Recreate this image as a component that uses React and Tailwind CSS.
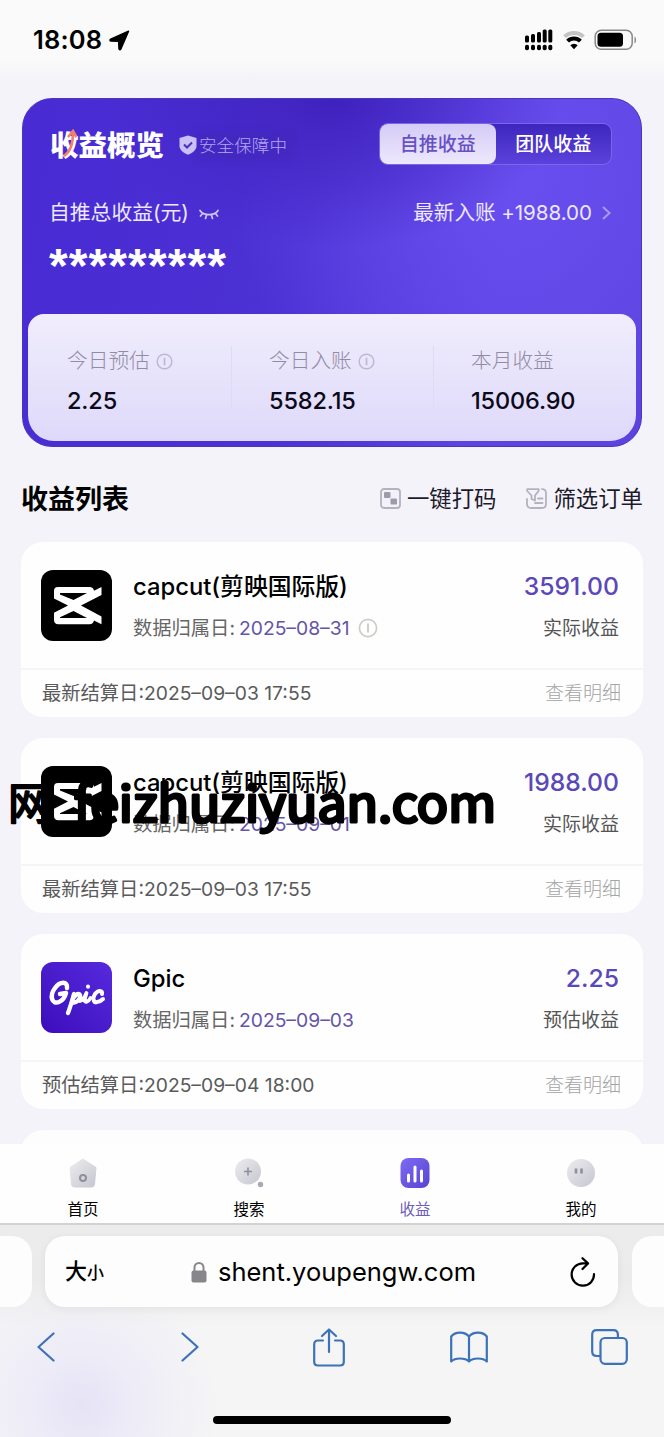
import React, { useState } from 'react';

const orders = [
  {
    name: 'capcut(剪映国际版)',
    logo: 'capcut',
    date: '2025–08–31',
    hint: true,
    amount: '3591.00',
    kind: '实际收益',
    settle: '最新结算日:2025–09–03 17:55'
  },
  {
    name: 'capcut(剪映国际版)',
    logo: 'capcut',
    date: '2025–09–01',
    hint: false,
    amount: '1988.00',
    kind: '实际收益',
    settle: '最新结算日:2025–09–03 17:55'
  },
  {
    name: 'Gpic',
    logo: 'gpic',
    date: '2025–09–03',
    hint: false,
    amount: '2.25',
    kind: '预估收益',
    settle: '预估结算日:2025–09–04 18:00'
  }
];

const stats = [
  { label: '今日预估', value: '2.25', hint: true },
  { label: '今日入账', value: '5582.15', hint: true },
  { label: '本月收益', value: '15006.90', hint: false }
];

const HintIcon = ({ className }) => (
  <svg className={className} viewBox="0 0 20 20" fill="none" stroke="currentColor" strokeWidth="1.7">
    <circle cx="10" cy="10" r="8.6" />
    <path d="M10 5.6v8.8" strokeWidth="2" />
  </svg>
);

const StatusBar = () => (
  <div className="h-20 shrink-0 bg-linear-to-b from-[#fafafa] from-75% to-[#f4f3f8] flex items-center justify-between pl-[33px] pr-[27px]">
    <div className="flex items-center gap-[7px]">
      <span className="text-[25.5px] leading-none font-semibold tracking-[0.2px]">18:08</span>
      <svg className="w-[21px] h-[21px]" viewBox="0 0 20 20">
        <path d="M18.6 1.2 11.2 18.2c-.5 1-1.6.8-1.7-.3l-.3-6.5c0-.4-.2-.6-.6-.6L1.9 10.5c-1.1-.1-1.3-1.2-.3-1.7z" stroke="#000" strokeWidth="1.4" strokeLinejoin="round" />
      </svg>
    </div>
    <div className="flex items-center">
      <svg className="w-7 h-[22px]" viewBox="0 0 28 22">
        <rect x="0" y="6.5" width="4" height="7" rx="1.5" />
        <rect x="6" y="5" width="4" height="8.5" rx="1.5" />
        <rect x="12" y="3" width="4" height="10.5" rx="1.5" />
        <rect x="17.7" y="0.5" width="4" height="13" rx="1.5" />
        <rect x="23.3" y="0.5" width="4" height="13" rx="1.5" />
        <rect x="0" y="15.7" width="4" height="5.6" rx="1.8" />
        <rect x="6" y="15.7" width="4" height="5.6" rx="1.8" />
        <rect x="12" y="15.7" width="4" height="5.6" rx="1.8" />
        <rect x="17.7" y="15.7" width="4" height="5.6" rx="1.8" />
        <rect x="23.3" y="15.7" width="4" height="5.6" rx="1.8" />
      </svg>
      <svg className="w-6 h-5 ml-[9px]" viewBox="0 0 24 20" fill="none">
        <path d="M2.5 6.6a14 14 0 0 1 19 0" stroke="#c4c4c4" strokeWidth="4" />
        <path d="M5.6 11.2a9 9 0 0 1 12.8 0" stroke="#000" strokeWidth="4" />
        <path d="M8.3 15.3a5.2 5.2 0 0 1 7.4 0L12 19.2z" fill="#000" />
      </svg>
      <svg className="w-[43px] h-[22px] ml-2" viewBox="0 0 43 22">
        <rect x="1.2" y="1.2" width="37" height="19" rx="6" fill="none" stroke="#888" strokeWidth="1.5" />
        <rect x="3.5" y="3.7" width="25.5" height="14" rx="3.5" />
        <path d="M40.5 7.5c2 .8 2 6.2 0 7z" fill="#888" />
      </svg>
    </div>
  </div>
);

const CapcutLogo = () => (
  <svg className="w-[71px] h-[71px] shrink-0" viewBox="0 0 71 71">
    <rect width="71" height="71" rx="12" />
    <path
      d="M60.5 17 53 20.8c-.5-2.7-2-3.8-4.5-3.8H17c-2.8 0-4 1.5-4 4v7.5L27 35.5 13 42.8v7.2c0 2.6 1.5 4.2 4.2 4.2h31.3c2.5 0 4-1.2 4.5-3.6l7.5 3.7v-7.8L40 35.5l20.5-10.6zM19 24.5v-1.6h27L32.5 30zM32.5 41l13.5 7.1H19v-.9z"
      fill="#fff"
      fillRule="evenodd"
    />
  </svg>
);

const GpicLogo = () => (
  <div className="w-[71px] h-[71px] shrink-0 rounded-xl bg-linear-to-bl from-[#5629dd] to-[#3c0bbb] flex items-center justify-center">
    <svg className="w-[60px] h-[42px]" viewBox="0 0 60 42" fill="none" stroke="#fff" strokeLinecap="round" strokeLinejoin="round">
      <path d="M20 11C21 4 13 4 8 11 2 19 5 28 12 25c4-1.6 6-5 7-9l-6 1" strokeWidth="4.5" />
      <path d="M21 36c2-5 4-12 6-19-1 3-1 4-2 7 2-6 7-9 8-6 1 4-4 9-8 7" strokeWidth="4.3" />
      <path d="M33 24c3-1 5-4 6.5-8l-2 7c0 3 4 2 6-2" strokeWidth="3.8" />
      <path d="M55 17c1-4-4-4-7 0-3 5-1 9 2 8 3 0 4-1 6-3" strokeWidth="4" />
      <path d="M41 9.5v.2" strokeWidth="4" />
    </svg>
  </div>
);

function Overview({ tab, onTab }) {
  const tabClass = (name) =>
    `flex-1 flex items-center justify-center rounded-lg pt-[2px] text-[19px] font-medium ${
      tab === name ? 'bg-linear-to-b from-[#d4ccf6] to-[#eee8fd] text-[#6651c4]' : 'text-white'
    }`;

  return (
    <section className="h-[349px] shrink-0 mx-[22px] mt-[18px] rounded-[30px] border border-[#4a35bd] bg-[radial-gradient(ellipse_230px_150px_at_310px_0px,#3f22bd_0,#3f22bd00_100%),radial-gradient(ellipse_280px_330px_at_490px_70px,#6a4ff0_0,#6a4ff000_100%),linear-gradient(100deg,#482bd3_0%,#4c31d4_45%,#5a41e0_75%,#5b42dc_100%)] px-[5px] pb-[5px] flex flex-col text-white">
      <div className="flex items-center justify-between mt-[24px] pl-[22px] pr-[24px] h-[42px]">
        <div className="flex items-center">
          <div className="relative top-[2px]">
            <h1 className="text-[28.5px] leading-10 font-black">收益概览</h1>
            <svg className="absolute left-[12px] top-[3px] w-4 h-[30px]" viewBox="0 0 16 30" fill="none" stroke="#f0806e" strokeWidth="2.6">
              <path d="M2 27C8 23 11 15 11 4M6 8l5-6 3.5 6" />
            </svg>
          </div>
          <svg className="relative top-[1px] w-[18px] h-5 ml-[15px]" viewBox="0 0 18 20">
            <path d="M9 0.5 17.5 3v8c0 4-4 7-8.5 8.7C4.5 18 .5 15 .5 11V3z" fill="#c9c0f5" />
            <path d="m5 9.5 3 3 5-5" fill="none" stroke="#4a2fc4" strokeWidth="2" />
          </svg>
          <span className="mt-[4px] ml-[2px] text-[17.6px] font-light text-[#b3a6f4] bg-[#3f27b8]/50 shadow-[0_0_6px_3px_rgba(63,39,184,0.5)] leading-5">安全保障中</span>
        </div>
        <div className="w-[233px] h-[42px] rounded-[9px] border border-[#7a67e6] bg-linear-to-b from-[#3d25bd] to-[#5b42dc] flex">
          <button className={tabClass('self')} onClick={() => onTab('self')}>自推收益</button>
          <button className={tabClass('team')} onClick={() => onTab('team')}>团队收益</button>
        </div>
      </div>

      <div className="flex items-center justify-between mt-[32px] pl-[21px] pr-[25px] h-8">
        <div className="flex items-center">
          <span className="text-[20.8px] text-[#ece8ff]">自推总收益(元)</span>
          <svg className="w-5 h-3 mt-[3px] ml-[10px]" viewBox="0 0 20 12" fill="none" stroke="#cfc6fa" strokeWidth="1.7" strokeLinecap="round">
            <path d="M1 1.5c3.5 5.5 14.5 5.5 18 0M3.5 4.5 1.5 7M7.5 6.2 6.5 9.5M12.5 6.2l1 3.3M16.5 4.5l2 2.5" />
          </svg>
        </div>
        <div className="flex items-center text-[20.6px] text-[#ece8ff]">
          <span className="tracking-[-0.05px]">最新入账 +1988.00</span>
          <svg className="w-[9px] h-4 ml-[10px]" viewBox="0 0 9 16" fill="none" stroke="#a99af2" strokeWidth="2">
            <path d="m1 2 6.5 6L1 14" />
          </svg>
        </div>
      </div>

      <div className="pl-[21px] h-[50px] mt-[12px] text-[48px] leading-[50px] font-bold tracking-[1.1px] font-['Liberation_Sans',sans-serif]">*********</div>

      <div className="mt-auto h-[127px] rounded-t-[16px] rounded-b-[26px] bg-linear-to-b from-[#f1edfc] to-[#ded9fa] grid grid-cols-[201px_202px_1fr]">
        {stats.map((s, i) => (
          <div key={s.label} className={`pt-[33px] relative ${i > 0 ? 'pl-[40px]' : 'pl-[39px]'}`}>
            {i > 0 && <div className="absolute left-[2px] top-[32px] h-16 w-px bg-[#dfdaf5]" />}
            <div className="flex items-center h-7 text-[20.7px] font-light text-[#918ca6]">
              {s.label}
              {s.hint && <HintIcon className="w-[17px] h-[17px] ml-[6px] text-[#bdb8d0]" />}
            </div>
            <div className="h-8 mt-[10px] leading-8 text-[23.5px] tracking-[-0.15px] font-medium text-[#0c0a18]">{s.value}</div>
          </div>
        ))}
      </div>
    </section>
  );
}

function Order({ order }) {
  return (
    <article className="h-[175px] shrink-0 rounded-[22px] bg-[#fefefe] mb-[21px]">
      <div className="h-[128px] border-b-2 border-[#f5f5f7] pl-[20px] pr-[19px] pt-[28px] flex">
        {order.logo === 'capcut' ? <CapcutLogo /> : <GpicLogo />}
        <div className="flex-1 ml-[21px]">
          <h3 className="h-8 mt-[1px] leading-8 text-[23.8px] font-medium text-black whitespace-nowrap">{order.name}</h3>
          <div className="h-7 mt-[11px] flex items-center text-[19.3px] text-[#666] whitespace-nowrap">
            数据归属日:
            <span className="ml-[4px] text-[#6355a8]">{order.date}</span>
            {order.hint && <HintIcon className="w-5 h-5 ml-[8px] text-[#cfcdc8]" />}
          </div>
        </div>
        <div className="text-right mr-[5px]">
          <div className="h-8 leading-8 text-[24.7px] font-medium text-[#5b48b8]">{order.amount}</div>
          <div className="h-7 mt-[13px] leading-7 text-[19px] text-[#555]">{order.kind}</div>
        </div>
      </div>
      <div className="h-[47px] pl-[21px] pr-[22px] flex items-center justify-between text-[19.3px]">
        <span className="text-[#5a5a5a]">{order.settle}</span>
        <span className="mt-[2px] text-[19px] font-light text-[#a4a4a4]">查看明细</span>
      </div>
    </article>
  );
}

const TabBar = () => {
  const tabs = [
    {
      label: '首页',
      icon: (
        <>
          <path d="M14 1 27 9.5 25.5 26c-.2 2-1 3-3 3h-17c-2 0-3-1-3-3L1 9.5z" fill="url(#grey)" stroke="url(#grey)" strokeLinejoin="round" />
          <circle cx="14" cy="20" r="3" fill="none" stroke="#8f8f9d" strokeWidth="2" />
        </>
      )
    },
    {
      label: '搜索',
      icon: (
        <>
          <circle cx="13" cy="13.5" r="13" fill="url(#grey)" />
          <path d="M9 13.5h8M13 9.5v8" stroke="#8f8f9d" strokeWidth="1.6" />
          <circle cx="25.5" cy="26.5" r="2.7" fill="#a9a9b3" />
        </>
      )
    },
    {
      label: '收益',
      active: true,
      icon: (
        <>
          <rect x="-.5" y="0" width="29" height="30" rx="8" fill="url(#violet)" />
          <path d="M7.5 17v6M14 9v14M20.5 13v10" stroke="#fff" strokeWidth="3" strokeLinecap="round" />
        </>
      )
    },
    {
      label: '我的',
      icon: (
        <>
          <circle cx="14" cy="15" r="14" fill="url(#grey)" />
          <path d="M9 10.5v5M14.5 10.5v5" stroke="#8f8f9d" strokeWidth="2.6" />
        </>
      )
    }
  ];
  return (
    <nav className="h-[81px] shrink-0 bg-[#fefefe] border-b-2 border-[#d2d2d2] grid grid-cols-4">
      {tabs.map((t) => (
        <div key={t.label} className="flex flex-col items-center pt-[14px]">
          <svg className="w-7 h-[30px] overflow-visible" viewBox="0 0 28 30">
            <defs>
              <linearGradient id="grey" x1="0" y1="0" x2="1" y2="1">
                <stop offset="0" stopColor="#ececef" />
                <stop offset="1" stopColor="#c6c6d0" />
              </linearGradient>
              <linearGradient id="violet" x1="0" y1="0" x2="1" y2="1">
                <stop offset="0" stopColor="#7d6cf2" />
                <stop offset="1" stopColor="#5a42d3" />
              </linearGradient>
            </defs>
            {t.icon}
          </svg>
          <span className={`mt-[10px] text-[15.5px] leading-6 ${t.active ? 'text-[#6c5db8]' : 'text-black'}`}>{t.label}</span>
        </div>
      ))}
    </nav>
  );
};

const Browser = () => (
  <footer className="h-[212px] shrink-0 bg-[radial-gradient(circle_at_82px_180px,#e6e3f6_0,#eeedf7_60px,#f5f5f6_135px)] flex flex-col">
    <div className="h-[104px] bg-linear-to-b from-[#ececec] via-[#ebebeb] to-transparent pt-[11px] flex justify-between">
      <div className="w-8 h-[71px] rounded-r-[20px] bg-[#fdfdfd]" />
      <div className="w-[574px] h-[71px] rounded-[20px] bg-[#fdfdfd] shadow-[0_2px_8px_rgba(0,0,0,0.06)] flex items-center pl-5 pr-[22px] ml-[13px] mr-[14px]">
        <span className="text-[22px] font-medium w-[44px] whitespace-nowrap">大<span className="text-[17px]">小</span></span>
        <div className="flex-1 flex items-center ml-[82px]">
          <svg className="w-4 h-[22px]" viewBox="0 0 16 22">
            <rect x="0.5" y="9.5" width="15" height="12" rx="2" fill="#87868b" />
            <path d="M3.5 10V6.5a4.5 4.5 0 0 1 9 0V10" fill="none" stroke="#87868b" strokeWidth="2" />
          </svg>
          <span className="ml-[11px] text-[25.5px] leading-8">shent.youpengw.com</span>
        </div>
        <svg className="w-[26px] h-[30px]" viewBox="0 0 26 30" fill="none" stroke="#000" strokeWidth="2.2" strokeLinecap="round" strokeLinejoin="round">
          <path d="M24 17A11.2 11.2 0 1 1 13 6.3h4.5M12.5 1.2l5.5 5.2-5.5 5.6" />
        </svg>
      </div>
      <div className="w-8 h-[71px] rounded-l-[20px] bg-[#fdfdfd]" />
    </div>

    <div className="h-9 flex items-center justify-between pl-[37px] pr-[36px] text-[#3c72b8]">
      <svg className="w-[18px] h-[30px]" viewBox="0 0 18 30" fill="none" stroke="currentColor" strokeWidth="2.2" strokeLinecap="round" strokeLinejoin="round">
        <path d="M16.5 1.5 1.5 15l15 13.5" />
      </svg>
      <svg className="w-[18px] h-[30px] ml-[9px]" viewBox="0 0 18 30" fill="none" stroke="currentColor" strokeWidth="2.2" strokeLinecap="round" strokeLinejoin="round">
        <path d="m1.5 1.5 15 13.5-15 13.5" />
      </svg>
      <svg className="w-8 h-[39px] -ml-[2px]" viewBox="0 0 32 39" fill="none" stroke="currentColor" strokeWidth="2.2" strokeLinecap="round" strokeLinejoin="round">
        <path d="M10 12.5H5c-2.4 0-3.8 1.4-3.8 3.8v17.4c0 2.4 1.4 3.8 3.8 3.8h22c2.4 0 3.8-1.4 3.8-3.8V16.3c0-2.4-1.4-3.8-3.8-3.8h-5M16 24V1.5M9 8l7-6.5L23 8" />
      </svg>
      <svg className="w-[38px] h-8 -ml-[12px]" viewBox="0 0 38 32" fill="none" stroke="currentColor" strokeWidth="2.2" strokeLinejoin="round">
        <path d="M19 5.5C15 .2 5 .2 1.2 5.5V30.5C5 26.5 15 26.5 19 30.5c4-4 14-4 17.8 0V5.5C33 .2 23 .2 19 5.5zM19 5.5v25" />
      </svg>
      <svg className="w-[37px] h-9 -ml-[13px]" viewBox="0 0 37 36" fill="none" stroke="currentColor" strokeWidth="2.2" strokeLinejoin="round">
        <rect x="9.5" y="9" width="26.3" height="25.8" rx="4.5" />
        <path d="M9.5 27H5.6c-3 0-4.4-1.5-4.4-4.5V5.7c0-3 1.5-4.5 4.4-4.5h16.8c3 0 4.5 1.5 4.5 4.5V9" />
      </svg>
    </div>

    <div className="mt-auto mb-[13px] w-[238px] h-2 rounded-full bg-black self-center" />
  </footer>
);

function App() {
  const [tab, setTab] = useState('self');

  return (
    <div className="relative w-[664px] h-[1437px] overflow-hidden bg-[#f4f3f9] flex flex-col text-black font-['Inter','Noto_Sans_CJK_SC',sans-serif]">
      <StatusBar />
      <main className="h-[1064px] shrink-0 overflow-hidden flex flex-col">
        <Overview tab={tab} onTab={setTab} />
        <div className="h-10 shrink-0 mt-[32px] mb-[23px] mx-[21px] flex items-center justify-between">
          <h2 className="mt-[3px] text-[27px] font-bold">收益列表</h2>
          <div className="flex items-center text-[22.4px] text-[#1c1a2c]">
            <svg className="w-[21px] h-[21px] mr-[6px]" viewBox="0 0 21 21">
              <rect x="1" y="1" width="19" height="19" rx="3" fill="#f3f2f8" stroke="#b3b2bf" strokeWidth="1.8" />
              <rect x="4" y="4" width="6.5" height="6" rx="1" fill="#9d9cab" />
              <rect x="10.5" y="10.5" width="6.5" height="6" rx="1" fill="#9d9cab" />
            </svg>
            一键打码
            <svg className="w-[21px] h-[21px] ml-[30px] mr-[6px]" viewBox="0 0 21 21" fill="none" stroke="#b3b2bf" strokeWidth="1.8" strokeLinecap="round" strokeLinejoin="round">
              <path d="M1.2 1.2h11.5v1.5L9 7.5v5L5.5 11V7.5L1.2 3zM16 1.2c2.5 0 4 1.2 4 4V16c0 2.5-1.5 4-4 4H5c-2.5 0-4-1.5-4-4v-5M12 10.5h4.5M9 15h7.5" />
            </svg>
            筛选订单
          </div>
        </div>
        <div className="mx-[21px] flex flex-col shrink-0">
          {orders.map((o, i) => (
            <Order key={i} order={o} />
          ))}
          <div className="h-10 rounded-t-[22px] bg-[#fdfdfd]" />
        </div>
      </main>
      <TabBar />
      <Browser />

      {/* site stamp over the list */}
      <svg className="absolute left-0 top-[765px] w-[510px] h-[80px] pointer-events-none" viewBox="0 0 510 80" stroke="#000" strokeLinejoin="round">
        <text x="8" y="55" fontSize="44" fontWeight="400" strokeWidth="2" fontFamily="'Noto Sans CJK SC', sans-serif">网</text>
        <text x="74" y="57" fontSize="49" fontWeight="400" strokeWidth="3.2" textLength="422" lengthAdjust="spacingAndGlyphs" fontFamily="'Noto Sans CJK SC', sans-serif">feizhuziyuan.com</text>
      </svg>
    </div>
  );
}

export default App;
